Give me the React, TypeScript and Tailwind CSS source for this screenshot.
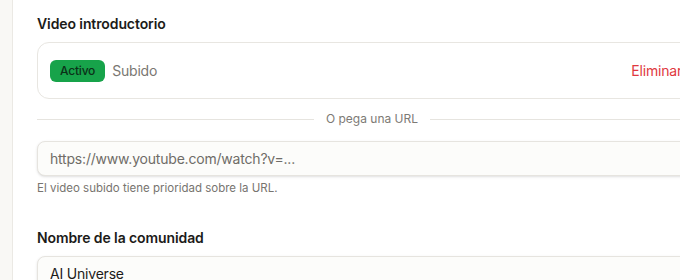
const fieldLabel = "text-sm font-semibold text-[#1c1b19] leading-5 tracking-[-0.1px]";

const App = () => {
	return (
		<div className="min-h-screen h-[280px] overflow-hidden bg-[#f9f8f5] font-['Inter',sans-serif]">
			<div className="ml-3 h-full border-l border-[#ebe9e4] bg-white pl-6 pt-3.5">
				<div className="w-[670px]">
					<h3 className={fieldLabel}>Video introductorio</h3>
					<div className="mt-2 flex h-[57px] items-center justify-between rounded-xl border border-[#e8e6e1] bg-white px-3">
						<div className="flex items-center gap-[7px]">
							<span className="rounded-md bg-[#17a34a] px-2.5 py-[3px] text-xs leading-4 font-medium tracking-[-0.2px] text-[#0b3018]">Activo</span>
							<span className="text-sm tracking-[-0.2px] text-[#7a7772]">Subido</span>
						</div>
						<button className="pr-3 text-sm tracking-[-0.2px] text-[#e0383e]">Eliminar</button>
					</div>

					<div className="mt-3 flex items-center gap-3">
						<div className="h-px flex-1 bg-[#e6e4df]" />
						<span className="text-xs leading-4 text-[#7d7a75]">O pega una URL</span>
						<div className="h-px flex-1 bg-[#e6e4df]" />
					</div>

					<input
						className="mt-3.5 block h-[35px] w-full rounded-lg border border-[#e6e4df] bg-[#fcfcfa] px-3 text-sm tracking-[-0.2px] text-[#1c1b19] shadow-sm outline-none placeholder:text-[#6f6c67]"
						placeholder="https://www.youtube.com/watch?v=..."
					/>
					<p className="mt-[4px] text-[11.5px] leading-4 text-[#77746f]">El video subido tiene prioridad sobre la URL.</p>

					<h3 className={`${fieldLabel} mt-8`}>Nombre de la comunidad</h3>
					<input
						className="mt-2 block h-[35px] w-full rounded-lg border border-[#e6e4df] bg-[#fcfcfa] px-3 text-sm tracking-[-0.2px] text-[#1c1b19] shadow-sm outline-none"
						defaultValue="AI Universe"
					/>
				</div>
			</div>
		</div>
	);
};

export default App;
